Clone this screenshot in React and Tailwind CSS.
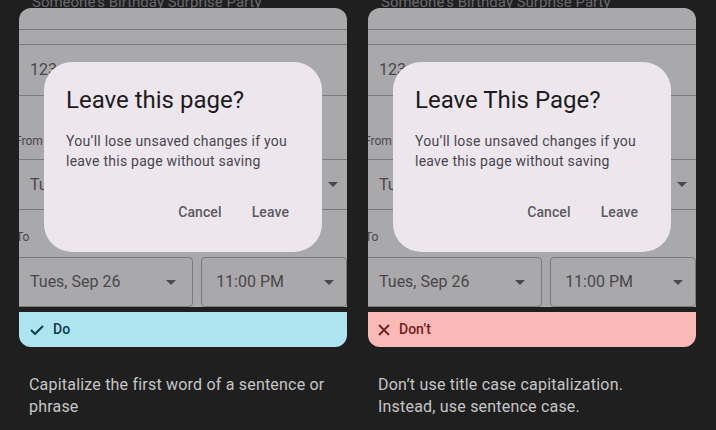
const FONT = { fontFamily: 'Roboto, "Liberation Sans", sans-serif' };

function Arrow() {
  return (
    <svg width="10" height="5" viewBox="0 0 10 5" className="shrink-0">
      <path d="M0 0 L10 0 L5 5 Z" fill="#4a494c" />
    </svg>
  );
}

function Screen({ title }) {
  return (
    <div className="relative h-[299px] overflow-hidden rounded-t-[12px] bg-[#a9a8aa] text-[#49474b]">
      <div className="h-[22px] border-b border-[#7b7a7c]" />
      <div className="h-[15px] border-b border-[#7b7a7c]" />
      <div className="flex h-[51px] items-center border-b border-[#7b7a7c] pl-[11px] text-[16px]">
        123 Anywhere St., Any City
      </div>
      <div className="h-[63px] pt-[37px] text-[12px] leading-[16px]">
        <span className="-ml-[4px]">From</span>
      </div>
      <div className="flex h-[51px] items-center justify-between border-y border-[#7b7a7c] pl-[11px] pr-[9px] text-[16px]">
        <span>Tues, Sep 26</span>
        <Arrow />
      </div>
      <div className="h-[47px] pt-[19px] text-[12px] leading-[16px]">
        <span className="-ml-[3px]">To</span>
      </div>
      <div className="-ml-[4px] flex h-[50px] gap-[8px] text-[16px]">
        <div className="flex w-[182px] items-center justify-between rounded-[4px] border border-[#7b7a7c] pl-[14px] pr-[16px]">
          <span>Tues, Sep 26</span>
          <Arrow />
        </div>
        <div className="flex w-[149px] items-center justify-between rounded-[4px] border border-[#7b7a7c] pl-[14px] pr-[12px]">
          <span>11:00 PM</span>
          <Arrow />
        </div>
      </div>

      <div className="absolute left-[25px] top-[54px] h-[190px] w-[278px] rounded-[28px] bg-[#ede7ed] pl-[22px] pt-[22px]">
        <div className="text-[24px] leading-[32px] text-[#1d1b20]">{title}</div>
        <p className="mt-[15px] text-[14px] leading-[20px] tracking-[0.25px] text-[#49454f]">
          You’ll lose unsaved changes if you
          <br />
          leave this page without saving
        </p>
        <div className="mt-[31px] flex justify-end gap-[30px] pr-[33px] text-[14px] font-medium leading-[20px] tracking-[0.1px] text-[#5d5863]">
          <span>Cancel</span>
          <span>Leave</span>
        </div>
      </div>
    </div>
  );
}

function Column({ title, good, caption }) {
  return (
    <div className="relative w-[328px]">
      <div className="absolute -top-[14px] left-[13px] text-[15px] leading-[16px] text-[#6a696c] whitespace-nowrap">
        Someone's Birthday Surprise Party
      </div>
      <Screen title={title} />
      {good ? (
        <div className="mt-[5px] flex h-[35px] items-center gap-[9px] rounded-b-[12px] bg-[#ade4ef] pl-[11px] text-[14px] font-medium text-[#0d3a4b]">
          <svg width="14" height="10" viewBox="0 0 14 10" fill="none">
            <path d="M1 5 L5 9 L13 1" stroke="#0d3a4b" strokeWidth="2" />
          </svg>
          <span>Do</span>
        </div>
      ) : (
        <div className="mt-[5px] flex h-[35px] items-center gap-[9px] rounded-b-[12px] bg-[#f9b9b7] pl-[10px] text-[14px] font-medium text-[#71201d]">
          <svg width="12" height="12" viewBox="0 0 12 12" fill="none">
            <path d="M1 1 L11 11 M11 1 L1 11" stroke="#71201d" strokeWidth="1.8" />
          </svg>
          <span>Don’t</span>
        </div>
      )}
      <p className="mt-[27px] max-w-[318px] pl-[10px] text-[16px] leading-[22px] tracking-[0.2px] text-[#c6c6c6]">
        {caption}
      </p>
    </div>
  );
}

export default function App() {
  return (
    <div className="h-[430px] w-[716px] overflow-hidden bg-[#1f1f1f]" style={FONT}>
      <div className="flex gap-[21px] pl-[19px] pt-[8px]">
        <Column
          good
          title="Leave this page?"
          caption={
            <>
              Capitalize the first word of a sentence or
              <br />
              phrase
            </>
          }
        />
        <Column
          title="Leave This Page?"
          caption={
            <>
              Don’t use title case capitalization.
              <br />
              Instead, use sentence case.
            </>
          }
        />
      </div>
    </div>
  );
}
